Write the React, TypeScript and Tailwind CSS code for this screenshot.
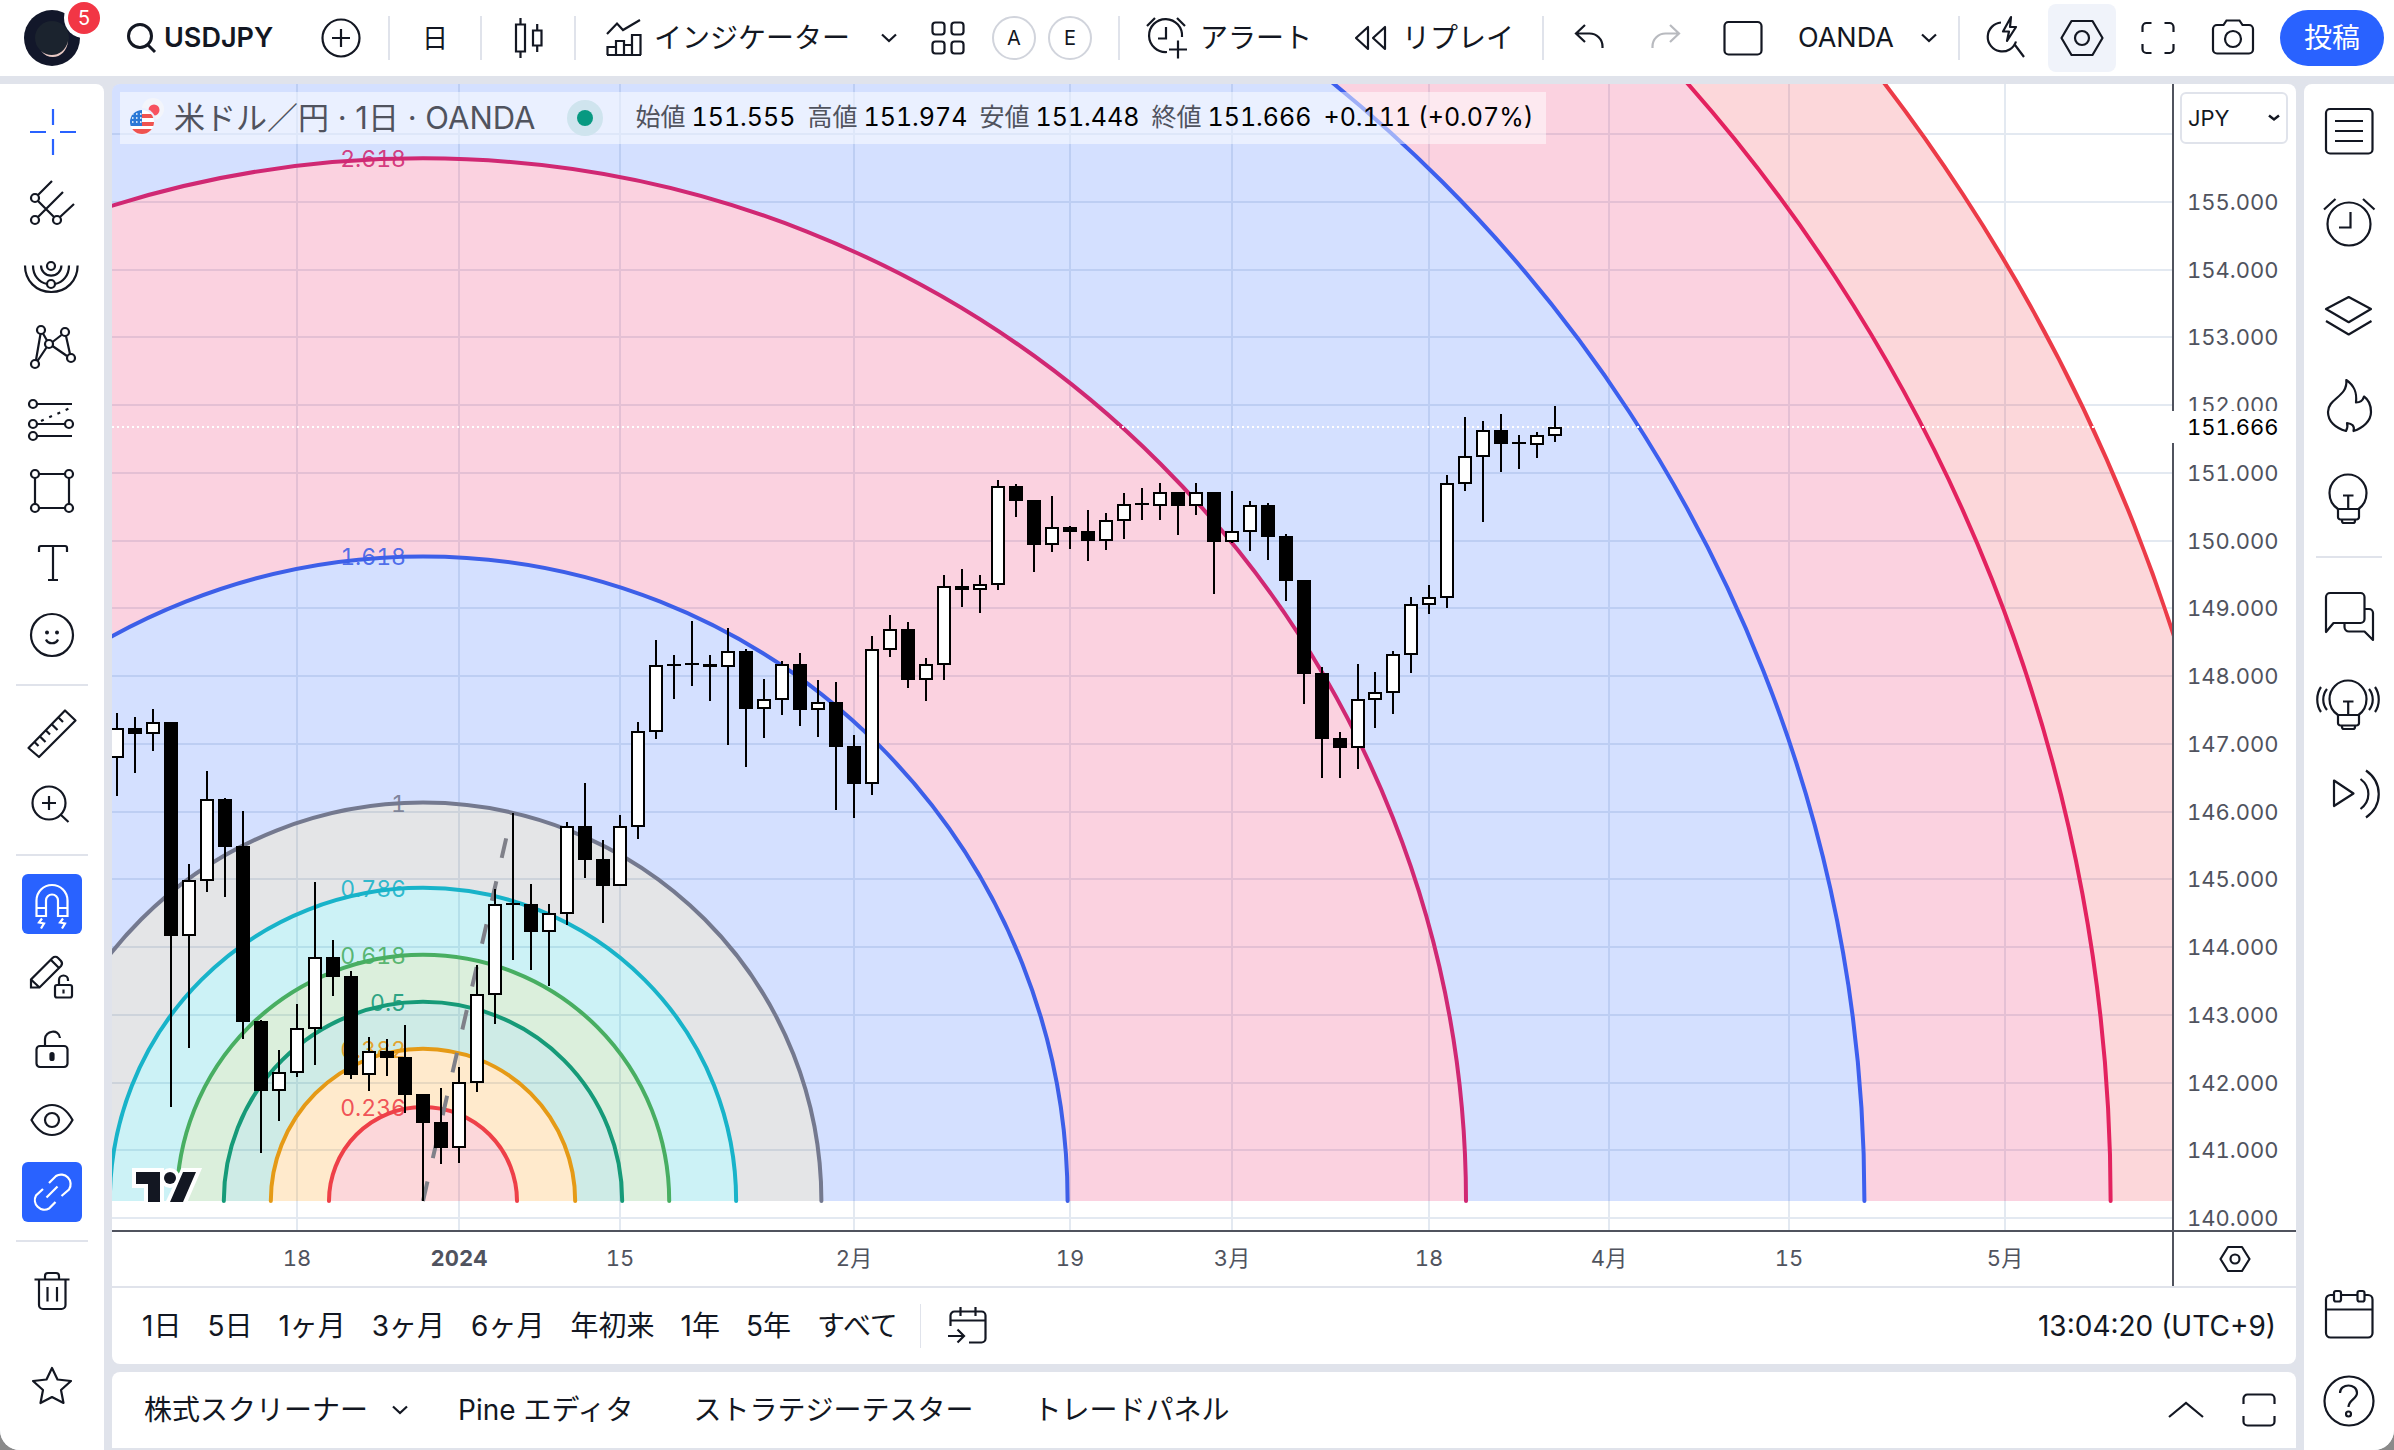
import type { ReactNode } from 'react';

// [high, body top, body bottom, low, filled]
type Candle = [number, number, number, number, 0 | 1];

const candles: Candle[] = [
  [713, 728, 758, 796, 0], [717, 728, 734, 773, 1], [709, 722, 734, 751, 0], [722, 722, 936, 1107, 1],
  [864, 880, 936, 1048, 0], [771, 799, 881, 892, 0], [798, 799, 847, 897, 1], [811, 846, 1022, 1039, 1],
  [1020, 1021, 1091, 1153, 1], [1050, 1072, 1091, 1121, 0], [1004, 1028, 1073, 1077, 0], [882, 957, 1029, 1065, 0],
  [940, 957, 977, 996, 1], [971, 976, 1075, 1079, 1], [1037, 1051, 1075, 1091, 0], [1039, 1051, 1058, 1076, 1],
  [1025, 1057, 1095, 1113, 1], [1094, 1094, 1123, 1201, 1], [1088, 1122, 1148, 1164, 1], [1067, 1082, 1148, 1163, 0],
  [965, 994, 1083, 1092, 0], [889, 904, 995, 1024, 0], [813, 903, 905, 960, 1], [884, 904, 932, 970, 1],
  [904, 913, 932, 986, 0], [822, 826, 914, 925, 0], [783, 826, 860, 878, 1], [840, 859, 886, 923, 1],
  [815, 826, 886, 886, 0], [722, 731, 827, 839, 0], [640, 665, 732, 739, 0], [655, 664, 666, 699, 1],
  [621, 663, 665, 686, 1], [655, 664, 667, 701, 1], [628, 651, 667, 745, 0], [649, 651, 709, 767, 1],
  [679, 699, 709, 738, 0], [661, 664, 700, 715, 0], [653, 664, 710, 726, 1], [680, 702, 710, 737, 0],
  [682, 702, 747, 810, 1], [735, 746, 784, 818, 1], [636, 649, 784, 795, 0], [615, 629, 650, 657, 0],
  [622, 629, 680, 688, 1], [658, 664, 680, 701, 0], [575, 586, 665, 680, 0], [569, 586, 590, 607, 1],
  [575, 584, 590, 613, 0], [480, 486, 585, 590, 0], [484, 486, 501, 517, 1], [500, 500, 545, 572, 1],
  [496, 527, 545, 552, 0], [526, 527, 532, 549, 1], [510, 531, 541, 561, 1], [513, 520, 541, 550, 0],
  [493, 504, 521, 539, 0], [488, 503, 505, 520, 1], [483, 492, 506, 520, 0], [492, 492, 506, 535, 1],
  [483, 492, 506, 515, 0], [492, 492, 542, 594, 1], [491, 531, 542, 543, 0], [501, 505, 532, 551, 0],
  [503, 505, 537, 560, 1], [534, 536, 581, 601, 1], [580, 580, 674, 704, 1], [667, 673, 739, 778, 1],
  [732, 738, 748, 778, 1], [664, 699, 748, 769, 0], [672, 692, 700, 728, 0], [651, 654, 693, 714, 0],
  [597, 604, 655, 673, 0], [585, 597, 605, 614, 0], [475, 483, 598, 608, 0], [417, 456, 484, 491, 0],
  [421, 430, 457, 522, 0], [414, 430, 444, 472, 1], [435, 442, 444, 469, 1], [432, 435, 445, 458, 0],
  [406, 427, 436, 442, 0],
];

const candleX = (i: number) => Math.floor(117.65 + 17.9762 * i);
const priceY = (price: number) => Math.round(405 + (152 - price) * 67.75);

const prices = [155, 154, 153, 152, 151, 150, 149, 148, 147, 146, 145, 144, 143, 142, 141, 140];

const dates = [
  { x: 297, label: '18' },
  { x: 459, label: '2024', bold: true },
  { x: 620, label: '15' },
  { x: 854, label: '2月' },
  { x: 1070, label: '19' },
  { x: 1232, label: '3月' },
  { x: 1429, label: '18' },
  { x: 1609, label: '4月' },
  { x: 1789, label: '15' },
  { x: 2005, label: '5月' },
];

// fibonacci circles, inner to outer
const CX = 423;
const CY = 1201;
const UNIT = 398.4;

const levels = [
  { k: 0.236, label: '0.236', fill: '#F23645', line: '#ee4048' },
  { k: 0.382, label: '0.382', fill: '#FF9800', line: '#e59a16' },
  { k: 0.5, label: '0.5', fill: '#089981', line: '#169a78' },
  { k: 0.618, label: '0.618', fill: '#4CAF50', line: '#48ae62' },
  { k: 0.786, label: '0.786', fill: '#00BCD4', line: '#18b3c9' },
  { k: 1, label: '1', fill: '#787B86', line: '#74798f' },
  { k: 1.618, label: '1.618', fill: '#2962FF', line: '#3d5fe8' },
  { k: 2.618, label: '2.618', fill: '#E91E63', line: '#d02873' },
  { k: 3.618, label: '', fill: '#2962FF', line: '#3d5fee' },
  { k: 4.236, label: '', fill: '#E91E63', line: '#e3225f' },
  { k: 4.618, label: '', fill: '#F23645', line: '#ec3b48' },
];

const halfCircle = (r: number) => `M${CX - r} ${CY}A${r} ${r} 0 0 1 ${CX + r} ${CY}`;

const Icon = ({ children, className = 'size-14' }: { children: ReactNode; className?: string }) => (
  <svg viewBox="0 0 56 56" fill="none" stroke="currentColor" strokeWidth="2.2" className={`shrink-0 overflow-visible ${className}`} aria-hidden="true">
    {children}
  </svg>
);

const Chevron = () => (
  <svg viewBox="0 0 16 10" fill="none" stroke="currentColor" strokeWidth="2.2" className="h-2.5 w-4" aria-hidden="true">
    <path d="M1 1.5 8 8l7-6.5" />
  </svg>
);

const Sep = () => <div className="h-11 w-0.5 shrink-0 bg-[#e0e3eb]" />;

const Bulb = () => (
  <>
    <path d="M17 39C11 35 8.500 29.500 8.500 23a18.500 18.500 0 0 1 37 0C45.500 29.500 43 35 37.500 39" />
    <path d="M17 39h21v8a2.500 2.500 0 0 1-2.500 2.500h-16A2.500 2.500 0 0 1 17 47zM21 50v1a2 2 0 0 0 2 2h9a2 2 0 0 0 2-2v-1M22 25.500h10.500M27.200 25.500V39" />
  </>
);

const tools: { name: string; active?: boolean; icon: ReactNode; sepAfter?: boolean }[] = [
  { name: 'カーソル', icon: <path className="text-[#2962ff]" stroke="currentColor" d="M29 5v16M29 35v16M6 28h16M36 28h16" /> },
  {
    name: 'トレンドライン',
    icon: (
      <>
        <circle cx="11" cy="22" r="4" /><circle cx="11" cy="44" r="4" /><circle cx="33" cy="44" r="4" />
        <path d="m14 19 14-14M14 41 39 16M14 25l16 16M36 41l14-13" />
      </>
    ),
  },
  {
    name: 'フィボナッチ',
    icon: (
      <>
        <circle cx="27" cy="18" r="4" /><circle cx="27" cy="36" r="4" />
        <path d="M17 17.500a10.200 10.200 0 0 0 20.400 0M9 17.500c0 10 6 17 14 18.500M31 36c8-1.500 14-8.500 14-18.500M1 17.500c0 15 11 26.500 26.300 26.500s26.300-11.500 26.300-26.500" />
      </>
    ),
  },
  {
    name: 'パターン',
    icon: (
      <>
        <circle cx="17" cy="10" r="4" /><circle cx="41" cy="12" r="4" /><circle cx="25" cy="24" r="4" /><circle cx="11" cy="44" r="4" /><circle cx="47" cy="38" r="4" />
        <path d="M16.500 14 12 40M19 13.500l4 7M28.500 22l9-7M42 16l4 18M28.500 26 43 36M22.500 27.500 13.500 41" />
      </>
    ),
  },
  {
    name: '予測',
    icon: (
      <>
        <circle cx="9" cy="12" r="4" /><circle cx="9" cy="32" r="4" /><circle cx="45" cy="32" r="4" /><circle cx="9" cy="44" r="4" />
        <path d="M13 12h35M13 32h28M13 44h35" />
        <path d="M17 29 46 16" strokeDasharray="3 6" />
      </>
    ),
  },
  {
    name: '図形',
    icon: (
      <>
        <circle cx="11" cy="10" r="4" /><circle cx="45" cy="10" r="4" /><circle cx="11" cy="44" r="4" /><circle cx="45" cy="44" r="4" />
        <path d="M15 10h26M15 44h26M11 14v26M45 14v26" />
      </>
    ),
  },
  { name: 'テキスト', icon: <path d="M15 16v-4a2 2 0 0 1 2-2h24a2 2 0 0 1 2 2v4M29 10v34M24 44h10" /> },
  {
    name: '絵文字',
    sepAfter: true,
    icon: (
      <>
        <circle cx="28" cy="27" r="21" />
        <circle cx="23" cy="24.500" r="2" fill="currentColor" stroke="none" /><circle cx="33" cy="24.500" r="2" fill="currentColor" stroke="none" />
        <path d="M22 31.500c2 5 10 5 12 0" />
      </>
    ),
  },
  {
    name: '計測',
    icon: <path d="M41 4.500 51.500 14.500 15 51 4.500 42zM10.500 36l4 4M16 30.500l5.500 5.500M22 24.500l4 4M28 18.500l5.500 5.500M34.500 11.500l4.500 4.500" strokeLinejoin="round" />,
  },
  {
    name: 'ズームイン',
    sepAfter: true,
    icon: (
      <>
        <circle cx="25" cy="25" r="16.500" /><path d="M25 18v14M18 25h14M37 37l7.500 7" />
      </>
    ),
  },
  {
    name: 'マグネット',
    active: true,
    icon: <path d="M12.500 40V24.500a15.500 15.500 0 0 1 31 0V40H34V24.500a6 6 0 0 0-12 0V40zM12.500 32H22M34 32h9.500M18 42.500l-3 4 5 1-3 5M39 42.500l-3 4 5 1-3 5" />,
  },
  {
    name: '描画モード',
    icon: (
      <>
        <path d="M7 39.500v-8L28.500 10a4 4 0 0 1 5.600 0L37 13a4 4 0 0 1 0 5L15.500 39.500zM7 31.500l8.500 8M27 12l8.500 8.500" />
        <rect x="31" y="37" width="17" height="12.500" rx="2" /><path d="M35 37v-5a4.500 4.500 0 0 1 9 0v1M39.500 41.500v4" />
      </>
    ),
  },
  {
    name: 'ロック',
    icon: (
      <>
        <rect x="12.500" y="26" width="31" height="21" rx="3.500" /><path d="M21 26v-7c0-8 14-11 15-1" />
        <rect x="26.500" y="33" width="3" height="7" rx="1.500" fill="currentColor" />
      </>
    ),
  },
  {
    name: '表示',
    icon: (
      <>
        <path d="M7.500 28c5-9 12-15 20.500-15s15.500 6 20.500 15c-5 9-12 15-20.500 15S12.500 37 7.500 28z" /><circle cx="28" cy="28" r="7" />
      </>
    ),
  },
  {
    name: 'リンク',
    active: true,
    sepAfter: true,
    icon: <path d="m25 19 7-7a9.600 9.600 0 0 1 13 13.500L37.500 32M19 25l-7 6.500A9.600 9.600 0 0 0 25 44.500l6.500-6.500M22.500 33.500 33.500 22.500" />,
  },
  {
    name: '削除',
    icon: <path d="M10.500 17.500h35M21 17.500V14a3 3 0 0 1 3-3h8a3 3 0 0 1 3 3v3.500M15 17.500V43a4 4 0 0 0 4 4h18.500a4 4 0 0 0 4-4V17.500M23.500 25v14.500M33 25v14.500" />,
  },
];

const topPanels: { name: string; icon: ReactNode }[] = [
  { name: 'ウォッチリスト', icon: <><rect x="5" y="7" width="46.500" height="44.500" rx="4" /><path d="M14 19h28M14 29h28M14 39h28" /></> },
  { name: 'アラート', icon: <><circle cx="28" cy="30" r="21.500" /><path d="M29.500 18v15.500H18M3 15.500l11.500-10.500M42 5l11.500 10.500" /></> },
  { name: 'オブジェクト', icon: <path d="M27.700 11 50 23 27.700 36.200 5 23zM5 35l22.700 13.500L50.500 35" strokeLinejoin="round" /> },
  {
    name: 'ホットリスト',
    icon: <path strokeLinejoin="round" d="M25.300 2C34 8 36 15 35 24.500c4 0 7-2.500 8-6C48 22 50 28 50 34c0 9-8 16-17.500 19C34 48 31 45.500 26 45c1 3 0 6-1 8C14 50 7 43 7 34 7 20 27 19 25.300 2z" />,
  },
  { name: 'アイデア', icon: <Bulb /> },
];

const chatPanels: { name: string; icon: ReactNode }[] = [
  {
    name: 'チャット',
    icon: <path strokeLinejoin="round" d="M5 44V9a4 4 0 0 1 4-4h30.500a4 4 0 0 1 4 4v22a4 4 0 0 1-4 4H12.500zM43.500 21H48a4 4 0 0 1 4 4v27l-8.500-8.500H28a4.500 4.500 0 0 1-4.500-4.500v-4" />,
  },
  {
    name: 'ストリーム',
    icon: <><Bulb /><path d="M6 13c-5 6-5 15 0 21M0 11c-5 7-5 18 0 25M48 13c5 6 5 15 0 21M54 11c5 7 5 18 0 25" /></>,
  },
  { name: '配信', icon: <path strokeLinejoin="round" d="M13 16.500 32.500 29.500 13 42zM39.500 15c10.500 8 10.500 22 0 30M45 6.500c17 12 17 35 0 47" /> },
];

const ranges = ['1日', '5日', '1ヶ月', '3ヶ月', '6ヶ月', '年初来', '1年', '5年', 'すべて'];

const ohlc = [
  ['始値', '151.555'],
  ['高値', '151.974'],
  ['安値', '151.448'],
  ['終値', '151.666'],
];

const Header = () => (
  <header className="flex h-[76px] shrink-0 items-center bg-white text-[28px]">
    <button aria-label="メニュー" className="relative ml-6 size-14 shrink-0 rounded-full bg-[#12172a]">
      <svg viewBox="0 0 56 56" className="size-14" aria-hidden="true">
        <circle cx="28" cy="28" r="17" fill="#1b232e" />
        <path d="M17 41c9 8 24 4 27-10-1 15-17 22-27 10z" fill="#e8c9c4" />
      </svg>
      <span className="absolute -top-2 left-11 flex size-8 items-center justify-center rounded-full bg-[#f23645] text-xl text-white ring-4 ring-white">5</span>
    </button>
    <button className="ml-10 flex w-[174px] items-center gap-1.5 pl-1.5 text-[27px] font-semibold">
      <svg viewBox="0 0 32 32" fill="none" stroke="currentColor" strokeWidth="3" className="size-8 shrink-0" aria-hidden="true">
        <circle cx="14" cy="14" r="11.500" /><path d="m21 22 8 8" />
      </svg>
      USDJPY
    </button>
    <button aria-label="比較" className="flex w-[94px] justify-center">
      <Icon><circle cx="28" cy="28" r="18.500" /><path d="M28 19v18M19 28h18" /></Icon>
    </button>
    <Sep />
    <button className="w-[90px] text-[26px]">日</button>
    <Sep />
    <button aria-label="ローソク足" className="flex w-[92px] justify-center">
      <Icon><path d="M16 14.500h9v27h-9zM20.500 8v6M20.500 42v6M33 20.500h8.500v15H33zM37.200 14v6M37.200 36v6" /></Icon>
    </button>
    <Sep />
    <button className="flex w-[280px] items-center gap-3 whitespace-nowrap pl-[30px]">
      <svg viewBox="0 0 36 38" fill="none" stroke="currentColor" strokeWidth="2.2" className="h-[38px] w-9 shrink-0" aria-hidden="true">
        <path d="m1 15 10-10.500 6 6.500L34 1M1.500 36V28H10v8M10 28v-6h8v14M18 26h8v10M26 26V16h8.500v20M1 36h34" />
      </svg>
      インジケーター
    </button>
    <button aria-label="お気に入りのインジケーター" className="flex w-[66px] justify-center"><Chevron /></button>
    <button aria-label="テンプレート" className="flex w-[52px] justify-center">
      <svg viewBox="0 0 34 34" fill="none" stroke="currentColor" strokeWidth="2.2" className="size-[34px]" aria-hidden="true">
        <rect x="1.500" y="1.500" width="12" height="12" rx="3" /><rect x="20.500" y="1.500" width="12" height="12" rx="3" />
        <rect x="1.500" y="20.500" width="12" height="12" rx="3" /><rect x="20.500" y="20.500" width="12" height="12" rx="3" />
      </svg>
    </button>
    <button className="ml-[18px] size-11 shrink-0 rounded-full border-2 border-[#d1d4dc] text-xl">A</button>
    <button className="ml-3 size-11 shrink-0 rounded-full border-2 border-[#d1d4dc] text-xl">E</button>
    <div className="w-[26px] shrink-0" />
    <Sep />
    <button className="flex w-[216px] items-center gap-3 whitespace-nowrap pl-[26px]">
      <svg viewBox="0 0 42 42" fill="none" stroke="currentColor" strokeWidth="2.2" className="size-[42px] shrink-0" aria-hidden="true">
        <path d="M21 35A16.500 16.500 0 1 1 36 20M20 10v11.500h-8M1 9l8-8M31 1l8 8M32 23.500v18M23 32.500h18" />
      </svg>
      アラート
    </button>
    <button className="flex w-[206px] items-center gap-3.5 whitespace-nowrap pl-[18px]">
      <svg viewBox="0 0 34 26" fill="none" stroke="currentColor" strokeWidth="2.2" className="h-[26px] w-[34px] shrink-0" aria-hidden="true">
        <path d="M14 2v22L2 13zM31 2v22L19 13z" strokeLinejoin="round" />
      </svg>
      リプレイ
    </button>
    <Sep />
    <button aria-label="元に戻す" className="flex w-[90px] justify-center">
      <Icon><path d="m24 15-9 8.500 9 8.500M15 23.500h13.500a13 13 0 0 1 13 13V38" /></Icon>
    </button>
    <button aria-label="やり直し" disabled className="flex w-16 justify-center text-[#b8babf]">
      <Icon><path d="m32 15 9 8.500-9 8.500M41 23.500H27.500a13 13 0 0 0-13 13V38" /></Icon>
    </button>
    <div className="min-w-0 flex-1" />
    <button aria-label="レイアウト" className="flex w-[90px] shrink-0 justify-center">
      <Icon><rect x="9.500" y="12" width="37" height="32.500" rx="4" /></Icon>
    </button>
    <button className="w-[112px] shrink-0 pl-2.5 text-left text-[27px]">OANDA</button>
    <button aria-label="レイアウトの管理" className="flex w-[58px] shrink-0 justify-center"><Chevron /></button>
    <Sep />
    <button aria-label="クイック検索" className="flex w-[88px] shrink-0 justify-center">
      <Icon>
        <path d="M25 12.500a14.500 14.500 0 1 0 15 19M39 35l9 12" /><path d="M35 7 27 21.500h6L31 31l9-14h-6z" strokeLinejoin="round" />
      </Icon>
    </button>
    <button aria-label="設定" className="flex h-[68px] w-[68px] shrink-0 items-center justify-center rounded-lg bg-[#f0f3fa]">
      <Icon><path d="M17.500 11h21L48.500 28l-10 17h-21L7.500 28z" strokeLinejoin="round" /><circle cx="28" cy="28" r="7" /></Icon>
    </button>
    <button aria-label="全画面" className="flex w-[84px] shrink-0 justify-center">
      <Icon><path d="M12.500 22v-5a4 4 0 0 1 4-4h5M34.500 13h5a4 4 0 0 1 4 4v5M43.500 34v5a4 4 0 0 1-4 4h-5M21.500 43h-5a4 4 0 0 1-4-4v-5" /></Icon>
    </button>
    <button aria-label="スナップショット" className="flex w-[68px] shrink-0 justify-center">
      <Icon><path d="M7 19a4 4 0 0 1 4-4h6.500l3-4.500h13l3 4.500H43a4 4 0 0 1 4 4v20.500a4 4 0 0 1-4 4H11a4 4 0 0 1-4-4z" /><circle cx="27" cy="29" r="8" /></Icon>
    </button>
    <button className="ml-3 mr-2.5 h-14 w-[104px] shrink-0 rounded-full bg-[#2962ff] text-white">投稿</button>
  </header>
);

const Toolbar = () => (
  <aside className="flex w-[104px] shrink-0 flex-col rounded-tr-lg bg-white pt-3">
    {tools.map((tool) => (
      <div key={tool.name}>
        <button aria-label={tool.name} className="flex h-[72px] w-full items-center justify-center">
          <span className={`flex size-[60px] items-center justify-center rounded-md ${tool.active ? 'bg-[#2962ff] text-white' : ''}`}>
            <Icon>{tool.icon}</Icon>
          </span>
        </button>
        {tool.sepAfter && <div className="mx-4 my-3 h-0.5 bg-[#e0e3eb]" />}
      </div>
    ))}
    <button aria-label="お気に入り" className="mt-6 flex h-[72px] w-full items-center justify-center">
      <Icon><path strokeLinejoin="round" d="m28 10 5.500 11.500 13.500 1.500-10 9 2.500 13L28 39l-11.500 6L19 32 9 23l13.500-1.500z" /></Icon>
    </button>
  </aside>
);

const PanelBar = () => (
  <aside className="flex w-[90px] shrink-0 flex-col rounded-tl-lg bg-white pb-1.5">
    {topPanels.map((panel) => (
      <button key={panel.name} aria-label={panel.name} className="flex h-[92px] items-center justify-center">
        <Icon>{panel.icon}</Icon>
      </button>
    ))}
    <div className="mx-3 mb-3.5 mt-3 h-0.5 bg-[#e0e3eb]" />
    {chatPanels.map((panel) => (
      <button key={panel.name} aria-label={panel.name} className="flex h-[88px] items-center justify-center">
        <Icon>{panel.icon}</Icon>
      </button>
    ))}
    <button aria-label="カレンダー" className="mt-auto flex h-[86px] items-center justify-center">
      <Icon>
        <path d="M13 8H9.500A4.500 4.500 0 0 0 5 12.500V46a4.500 4.500 0 0 0 4.500 4.500H47a4.500 4.500 0 0 0 4.500-4.500V12.500A4.500 4.500 0 0 0 47 8h-3.500M20 8h16.500M5 22.500h46.500" />
        <rect x="13" y="4" width="7" height="10.500" rx="2" /><rect x="36.500" y="4" width="7" height="10.500" rx="2" />
      </Icon>
    </button>
    <button aria-label="ヘルプ" className="flex h-[86px] items-center justify-center">
      <Icon><circle cx="28" cy="28" r="24.500" /><path d="M19 20c0-10 17-10 17 0 0 6-8.500 7-8.500 14" /><circle cx="27.500" cy="41" r="2.500" /></Icon>
    </button>
  </aside>
);

const Chart = () => (
  <svg viewBox="112 84 2184 1204" preserveAspectRatio="xMaxYMin slice" className="block h-full w-full tabular-nums">
    <clipPath id="plot"><rect x="112" y="84" width="2060" height="1146" /></clipPath>
    <g clipPath="url(#plot)">
      <g fill="#e3e9f1">
        {dates.map((d) => <rect key={d.x} x={d.x - 1} y="84" width="2" height="1146" />)}
        {[156, ...prices].map((p) => <rect key={p} x="112" y={priceY(p) - 1} width="2060" height="2" />)}
      </g>

      {levels.map((level, i) => {
        const inner = i > 0 ? halfCircle(levels[i - 1].k * UNIT) + 'Z' : '';
        return <path key={level.k} d={`${halfCircle(level.k * UNIT)}Z${inner}`} fill={level.fill} fillOpacity="0.2" fillRule="evenodd" />;
      })}
      {levels.map((level) => (
        <path key={level.k} d={halfCircle(level.k * UNIT)} fill="none" stroke={level.line} strokeWidth="4" strokeLinecap="round" />
      ))}
      {levels.map((level) => level.label && (
        <text key={level.k} x="406" y={CY - level.k * UNIT + 9} textAnchor="end" fill={level.line} fillOpacity="0.9" className="text-[23px]">
          {level.label}
        </text>
      ))}
      <path d={`M${CX} ${CY}L512 813`} stroke="#7f8089" strokeWidth="4" strokeDasharray="20 24" />
      <path d="M112 427H2172" stroke="#fff" strokeWidth="2" strokeDasharray="2 3" />

      <g shapeRendering="crispEdges">
        {candles.map(([high, top, bottom, low, filled], i) => (
          <g key={i}>
            <rect x={candleX(i) - 1} y={high} width="2" height={low - high} />
            <rect x={candleX(i) - 7} y={top} width="14" height={bottom - top} />
            {!filled && <rect x={candleX(i) - 5} y={top + 2} width="10" height={bottom - top - 4} fill="#fff" />}
          </g>
        ))}
      </g>

      <g id="logo">
        <g fill="#fff" stroke="#fff" strokeWidth="8">
          <path d="M136 1172h24v30h-12v-18h-12zM184 1172h12l-13 30h-13z" /><circle cx="170" cy="1178" r="6" />
        </g>
        <g fill="#131722">
          <path d="M136 1172h24v30h-12v-18h-12zM183 1172h13l-13 30h-13z" /><circle cx="170" cy="1178" r="6" />
        </g>
      </g>
      <rect x="132" y="1202" width="70" height="5" fill="#fff" />
    </g>

    <g fill="#50535e">
      <rect x="2172" y="84" width="2" height="1202" />
      <rect x="112" y="1230" width="2184" height="2" />
      {prices.map((p) => (
        <text key={p} x="2187" y={priceY(p) + 8} className="text-[22px]">{p.toFixed(3)}</text>
      ))}
      {dates.map((d) => (
        <text key={d.x} x={d.x} y="1266" textAnchor="middle" className={d.bold ? 'text-[22px] font-bold' : 'text-[22px]'}>{d.label}</text>
      ))}
    </g>
    <rect x="2172" y="411" width="124" height="32" fill="#fff" />
    <text x="2187" y="435" fill="#000" className="text-[22px]">151.666</text>
    <rect x="112" y="1286" width="2184" height="2" fill="#e0e3eb" />
  </svg>
);

const Legend = () => (
  <div className="absolute left-2 top-2 flex h-[52px] items-center whitespace-nowrap bg-white/50 pl-2 pr-3">
    <svg viewBox="0 0 40 44" className="h-11 w-10" aria-hidden="true">
      <circle cx="25" cy="13" r="11" fill="#f3f5fb" />
      <circle cx="26" cy="14" r="5.500" fill="#f7525f" />
      <circle cx="14" cy="26" r="14" fill="#eaf0ff" />
      <clipPath id="flag"><circle cx="14" cy="26" r="12" /></clipPath>
      <g clipPath="url(#flag)">
        <rect x="2" y="14" width="24" height="24" fill="#fff" />
        <path d="M14 18h12v4H14zM14 26h12v4H14zM2 33h24v5H2z" fill="#ef5350" />
        <rect x="2" y="14" width="12" height="16" fill="#2a78d6" />
        <path d="M4 18h10M4 22h10M4 26h10" stroke="#fff" strokeWidth="1.500" strokeDasharray="1.500 2.500" />
      </g>
    </svg>
    <span className="ml-1.5 text-[31px] text-[#50535e]">米ドル／円 · 1日 · OANDA</span>
    <span className="ml-8 flex size-9 items-center justify-center rounded-full bg-[#cfe4ee]">
      <span className="size-4 rounded-full bg-[#089981]" />
    </span>
    <span className="ml-8 flex gap-3 text-[25px] tabular-nums text-black">
      {ohlc.map(([label, value]) => (
        <span key={label} className="flex gap-1.5"><span className="text-[#50535e]">{label}</span>{value}</span>
      ))}
      <span>+0.111 (+0.07%)</span>
    </span>
  </div>
);

const App = () => (
  <div className="min-h-screen bg-[#8a8a8a]">
    <div className="flex h-screen flex-col overflow-hidden rounded-b-[20px] bg-[#e0e3eb] text-[#131722]" style={{ fontFamily: 'Inter, "Noto Sans CJK JP", sans-serif' }}>
      <Header />
      <div className="mt-2 flex min-h-0 flex-1 gap-2">
        <Toolbar />
        <div className="flex min-w-0 flex-1 flex-col gap-2">
          <main className="flex min-h-0 flex-1 flex-col overflow-hidden rounded-lg bg-white">
            <div className="relative min-h-0 flex-1">
              <Chart />
              <Legend />
              <div className="absolute right-2 top-2 flex items-center">
                <select aria-label="通貨" defaultValue="JPY" className="h-[52px] w-[108px] appearance-none rounded-md border-2 border-[#e0e3eb] bg-white pl-1.5 text-[22px]">
                  <option>JPY</option>
                </select>
                <svg viewBox="0 0 12 8" fill="none" stroke="currentColor" strokeWidth="2.5" className="pointer-events-none absolute right-2 h-2 w-3" aria-hidden="true">
                  <path d="m1 1.500 5 4 5-4" />
                </svg>
              </div>
              <button aria-label="スケール設定" className="absolute bottom-3 right-10">
                <svg viewBox="0 0 42 34" fill="none" stroke="currentColor" strokeWidth="2.2" className="h-[34px] w-[42px]" aria-hidden="true">
                  <path d="M14 5h14l7.500 12L28 29H14L6.500 17z" strokeLinejoin="round" /><circle cx="21" cy="17" r="4.500" />
                </svg>
              </button>
            </div>
            <div className="flex h-[76px] shrink-0 items-center pl-[30px] pr-5 text-[28px]">
              <div className="flex gap-[26px]">
                {ranges.map((r) => <button key={r} className="whitespace-nowrap">{r}</button>)}
              </div>
              <div className="ml-[22px] h-11 w-px bg-[#e0e3eb]" />
              <button aria-label="日付へ移動" className="ml-6">
                <svg viewBox="0 0 44 40" fill="none" stroke="currentColor" strokeWidth="2.2" className="h-10 w-11" aria-hidden="true">
                  <path d="M5.500 20V9.500a4 4 0 0 1 4-4h27a4 4 0 0 1 4 4v23a4 4 0 0 1-4 4H24M5.500 14.500h35M15.500 1v9M30.500 1v9M3 30h15M12.500 23.500l6.500 6.500-6.500 6.500" />
                </svg>
              </button>
              <button className="ml-auto">13:04:20 (UTC+9)</button>
            </div>
          </main>
          <footer className="mb-0.5 flex h-[76px] shrink-0 items-center rounded-t-lg bg-white pl-8 pr-5 text-[28px]">
            <button className="whitespace-nowrap">株式スクリーナー</button>
            <button aria-label="スクリーナーの種類" className="ml-6"><Chevron /></button>
            <button className="ml-[50px] whitespace-nowrap">Pine エディタ</button>
            <button className="ml-15 whitespace-nowrap">ストラテジーテスター</button>
            <button className="ml-15 whitespace-nowrap">トレードパネル</button>
            <button aria-label="パネルを開く" className="ml-auto">
              <svg viewBox="0 0 36 18" fill="none" stroke="currentColor" strokeWidth="2.2" className="h-[18px] w-9" aria-hidden="true">
                <path d="M1 16 18 2l17 14" />
              </svg>
            </button>
            <button aria-label="パネルを最大化" className="ml-[38px]">
              <svg viewBox="0 0 34 34" fill="none" stroke="currentColor" strokeWidth="2.2" className="size-[34px]" aria-hidden="true">
                <path d="M1.500 11V5.500a4 4 0 0 1 4-4h23a4 4 0 0 1 4 4V11M1.500 23v5.500a4 4 0 0 0 4 4h23a4 4 0 0 0 4-4V23" />
              </svg>
            </button>
          </footer>
        </div>
        <PanelBar />
      </div>
    </div>
  </div>
);

export default App;
